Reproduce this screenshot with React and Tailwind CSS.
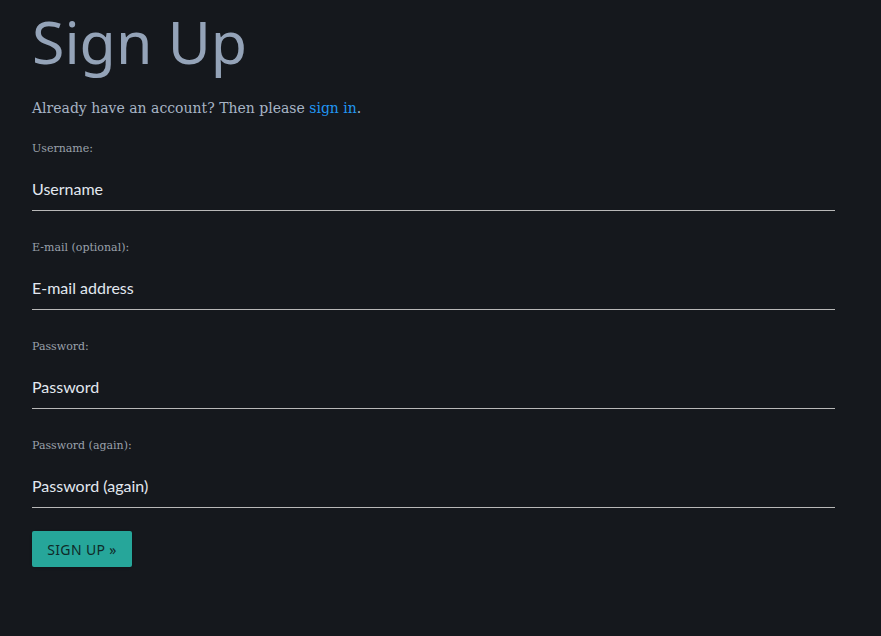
import React from "react";

const fields = [
  { label: "Username:", placeholder: "Username", type: "text" },
  { label: "E-mail (optional):", placeholder: "E-mail address", type: "email" },
  { label: "Password:", placeholder: "Password", type: "password" },
  { label: "Password (again):", placeholder: "Password (again)", type: "password" },
];

const Field = ({ label, placeholder, type }) => (
  <div className="flex flex-col">
    <label className="text-[11px] leading-4 text-[#9aa1ab] font-['DejaVu_Serif',serif]">{label}</label>
    <input
      type={type}
      placeholder={placeholder}
      className="mt-[10px] h-[44px] w-full border-0 border-b border-[#b8b8b8] bg-transparent text-[16px] text-[#e2e8f0] outline-none placeholder:text-[#e2e8f0] font-['Lato',sans-serif]"
    />
  </div>
);

export default function App() {
  return (
    <div className="min-h-screen bg-[#15181d] pl-8 pr-[46px]">
      <h1 className="pt-[2px] text-[59px] leading-[78px] text-[#94a3b8] font-['Noto_Sans',sans-serif]">Sign Up</h1>
      <p className="mt-[18px] text-[14px] text-[#a7b4c5] font-['DejaVu_Serif',serif]">
        Already have an account? Then please <a href="#" className="text-[#2196f3]">sign in</a>.
      </p>
      <form className="mt-[22px] flex flex-col gap-[29px]">
        {fields.map((f) => (
          <Field key={f.label} {...f} />
        ))}
      </form>
      <button className="mt-[23px] h-[36px] w-[100px] rounded-[2px] bg-[#26a69a] text-[14px] tracking-wide text-[#0f2a28] font-['Noto_Sans',sans-serif] shadow">
        SIGN UP »
      </button>
    </div>
  );
}
